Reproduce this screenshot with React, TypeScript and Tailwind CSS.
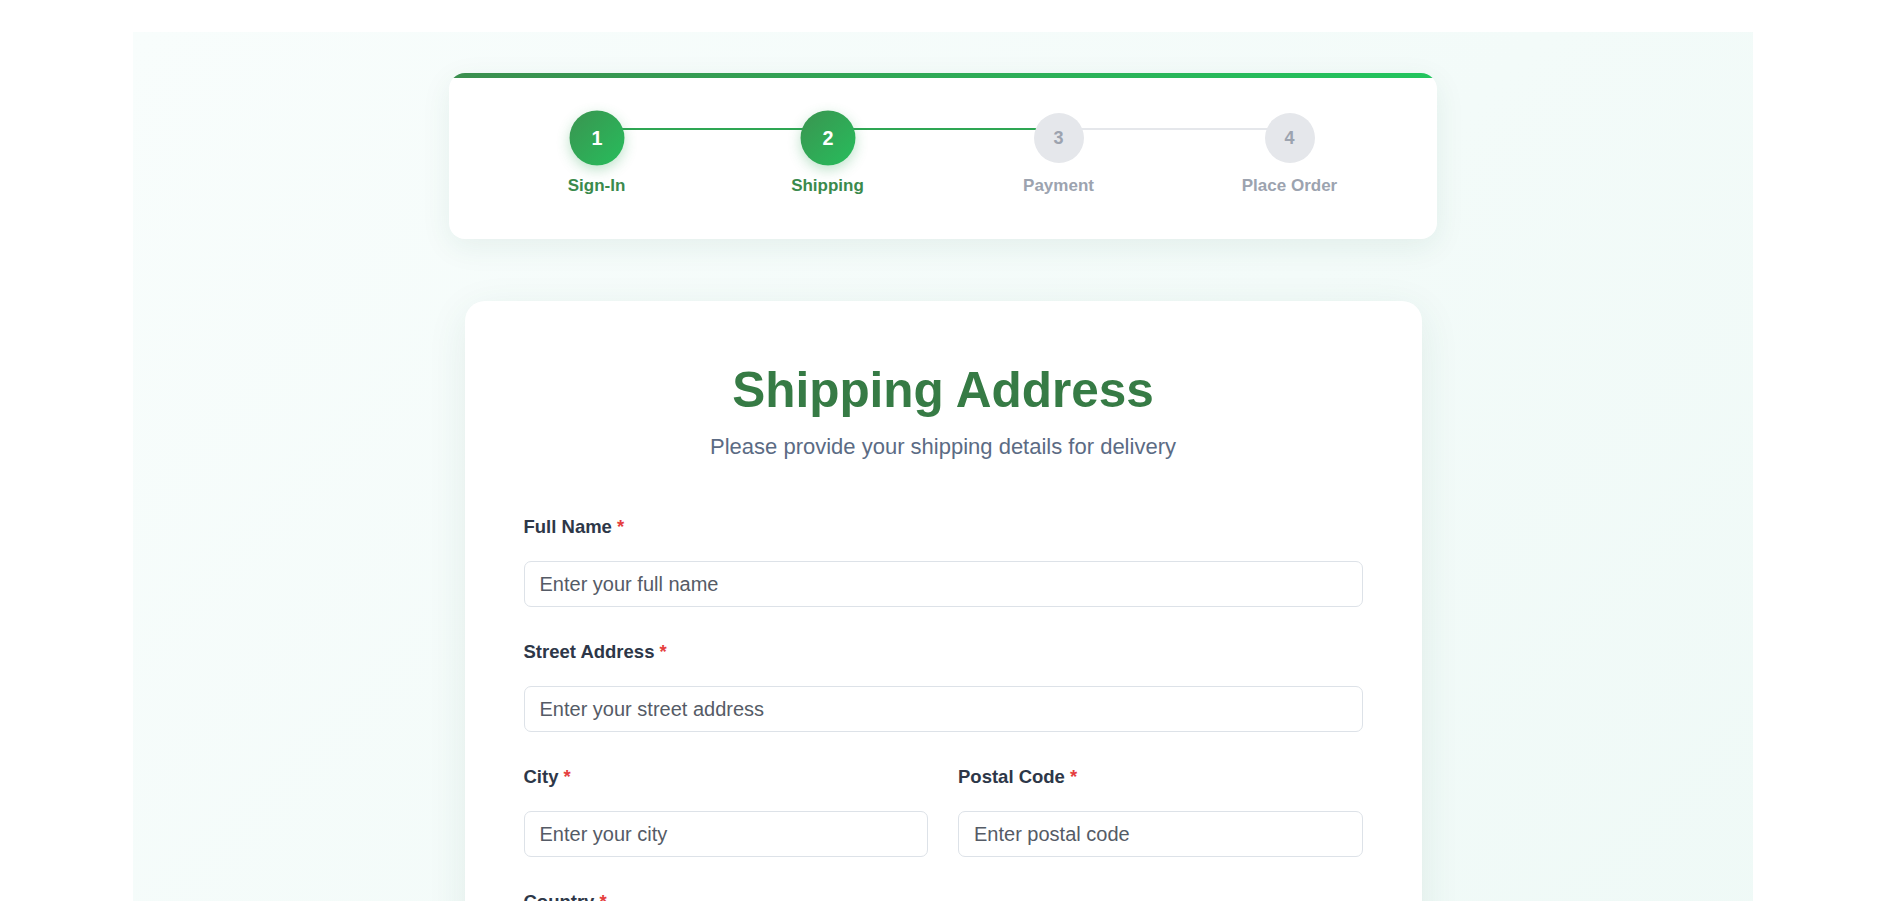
import React from "react";

const steps = [
  { n: 1, label: "Sign-In", done: true },
  { n: 2, label: "Shipping", done: true },
  { n: 3, label: "Payment", done: false },
  { n: 4, label: "Place Order", done: false },
];

const Field = ({ label, placeholder }: { label: string; placeholder: string }) => (
  <div className="flex flex-col">
    <label className="text-[18.5px] leading-[28px] font-bold text-[#2d3748] mb-[20px]">
      {label} <span className="text-[#e53e3e]">*</span>
    </label>
    <input
      className="h-[46px] w-full rounded-[7px] border border-[#dde2e8] bg-white px-[15px] text-[20px] text-[#2d3748] placeholder:text-[#555b66] outline-none"
      placeholder={placeholder}
    />
  </div>
);

const CheckoutSteps = () => (
  <div className="w-[988px] rounded-[16px] bg-white overflow-hidden shadow-[0_8px_30px_rgba(30,90,70,0.08)]">
    <div className="h-[5px] bg-[linear-gradient(90deg,#3b8f4f,#22c55e)]" />
    <div className="flex px-8 pt-[35px] pb-[41px]">
      {steps.map((s, i) => (
        <div key={s.n} className="relative flex-1 flex flex-col items-center">
          {i < steps.length - 1 && (
            <div
              className={
                "absolute top-[15px] left-1/2 w-full h-[2px] " +
                (i < 2 ? "bg-[#2ea653]" : "bg-[#e5e7eb]")
              }
            />
          )}
          {s.done ? (
            <div className="relative z-10 w-[50px] h-[50px] scale-110 rounded-full flex items-center justify-center bg-[linear-gradient(135deg,#3a9450,#27bd5c)] text-white text-[18px] font-bold shadow-[0_4px_12px_rgba(40,160,80,0.3)]">
              {s.n}
            </div>
          ) : (
            <div className="relative z-10 w-[50px] h-[50px] rounded-full flex items-center justify-center bg-[#e5e7eb] text-[#9ca3af] text-[18px] font-bold">
              {s.n}
            </div>
          )}
          <div
            className={
              "mt-[11px] text-[17px] leading-[24px] font-bold " +
              (s.done ? "text-[#3a8a4c]" : "text-[#9ca3af]")
            }
          >
            {s.label}
          </div>
        </div>
      ))}
    </div>
  </div>
);

export default function App() {
  return (
    <div className="min-h-screen bg-white pt-[32px] font-['Liberation_Sans',Arial,sans-serif]">
      <div className="ml-[133px] w-[1620px] min-h-[1200px] bg-[linear-gradient(135deg,#f8fdfc,#eef9f6)] pt-[41px] pb-16 flex flex-col items-center">
        <CheckoutSteps />
        <div className="mt-[62px] w-[957px] rounded-[20px] bg-white p-[59px] shadow-[0_10px_40px_rgba(30,90,70,0.09)]">
          <h1 className="text-center text-[49.5px] leading-[60px] font-bold text-[#367b45]">
            Shipping Address
          </h1>
          <p className="mt-[10px] text-center text-[22px] leading-[33px] text-[#5b6b84]">
            Please provide your shipping details for delivery
          </p>
          <form className="mt-[50px] flex flex-col gap-[31px]">
            <Field label="Full Name" placeholder="Enter your full name" />
            <Field label="Street Address" placeholder="Enter your street address" />
            <div className="grid grid-cols-2 gap-[30px]">
              <Field label="City" placeholder="Enter your city" />
              <Field label="Postal Code" placeholder="Enter postal code" />
            </div>
            <Field label="Country" placeholder="Enter your country" />
            <button
              type="button"
              className="mt-[10px] h-[56px] rounded-[10px] bg-[linear-gradient(135deg,#3a9450,#27bd5c)] text-white text-[20px] font-bold"
            >
              Continue to Payment
            </button>
          </form>
        </div>
      </div>
    </div>
  );
}
